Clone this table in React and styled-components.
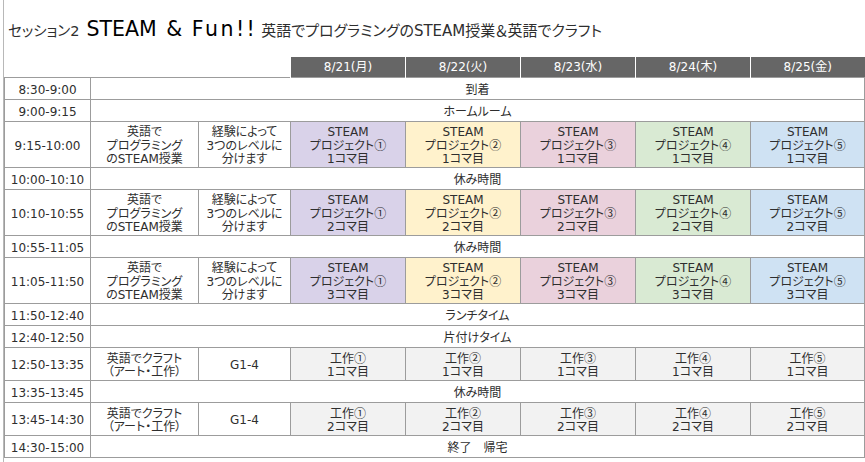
import React from 'react';
import styled, { createGlobalStyle } from 'styled-components';

const GlobalStyle = createGlobalStyle`
  html, body {
    margin: 0;
    padding: 0;
    background: #fff;
  }
  body {
    font-family: "DejaVu Sans", "Noto Sans CJK JP", sans-serif;
    color: #2e2e2e;
  }
`;

const Page = styled.div`
  margin-left: 3px;
  min-height: 462px;
  border-left: 1px solid #b8b8b8;
  font-feature-settings: "palt";
`;

const TitleBar = styled.div`
  display: flex;
  align-items: baseline;
  height: 57px;
  box-sizing: border-box;
  padding: 17px 0 0 4px;
  white-space: pre;
`;

const Session = styled.span`
  font-size: 14.5px;
`;

const BigTitle = styled.span`
  font-size: 20.5px;
  color: #000;
  margin: 0 4px 0 7px;
  word-spacing: 3px;
`;

const Fun = styled.span`
  letter-spacing: 2.5px;
`;

const Subtitle = styled.span`
  font-size: 15px;
`;

const Table = styled.table`
  border-collapse: collapse;
  table-layout: fixed;
  width: 860px;
  font-size: 12px;
  line-height: 13.5px;
  text-align: center;
`;

const HeadCell = styled.th`
  height: 18px;
  padding: 2px 0 0;
  font-weight: normal;
  font-size: 12px;
  color: #fff;
  background: ${(p) => (p.$empty ? 'transparent' : '#666')};
  border: none;
  border-left: ${(p) => (p.$empty ? 'none' : '1px solid #fff')};
`;

/* $h is the full row pitch; content height = pitch - border - top padding */
const Cell = styled.td`
  height: ${(p) => p.$h - 5}px;
  padding: 4px 0 0;
  border: 1px solid #9c9c9c;
  background: ${(p) => p.$bg || '#fff'};
  vertical-align: middle;
`;

const Circled = styled.span`
  font-family: "Noto Sans CJK JP", sans-serif;
  font-feature-settings: normal;
  line-height: 0;
`;

const days = ['8/21(月)', '8/22(火)', '8/23(水)', '8/24(木)', '8/25(金)'];
const steamColors = ['#d9d2e9', '#fff2cc', '#ead1dc', '#d9ead3', '#cfe2f3'];
const marks = ['①', '②', '③', '④', '⑤'];
const widths = [86, 108, 92, 115, 115, 115, 115, 114];

const rows = [
  { kind: 'break', time: '8:30-9:00', label: '到着' },
  { kind: 'break', time: '9:00-9:15', label: 'ホームルーム' },
  { kind: 'steam', time: '9:15-10:00', n: 1 },
  { kind: 'break', time: '10:00-10:10', label: '休み時間' },
  { kind: 'steam', time: '10:10-10:55', n: 2 },
  { kind: 'break', time: '10:55-11:05', label: '休み時間' },
  { kind: 'steam', time: '11:05-11:50', n: 3 },
  { kind: 'break', time: '11:50-12:40', label: 'ランチタイム' },
  { kind: 'break', time: '12:40-12:50', label: '片付けタイム' },
  { kind: 'craft', time: '12:50-13:35', n: 1 },
  { kind: 'break', time: '13:35-13:45', label: '休み時間' },
  { kind: 'craft', time: '13:45-14:30', n: 2 },
  { kind: 'break', time: '14:30-15:00', label: '終了　帰宅' },
];

const Row = ({ row }) => {
  if (row.kind === 'break') {
    return (
      <tr>
        <Cell $h={22}>{row.time}</Cell>
        <Cell $h={22} colSpan={7}>{row.label}</Cell>
      </tr>
    );
  }
  if (row.kind === 'steam') {
    return (
      <tr>
        <Cell $h={46}>{row.time}</Cell>
        <Cell $h={46}>英語で<br />プログラミング<br />のSTEAM授業</Cell>
        <Cell $h={46}>経験によって<br />3つのレベルに<br />分けます</Cell>
        {steamColors.map((c, i) => (
          <Cell key={i} $h={46} $bg={c}>
            STEAM<br />プロジェクト<Circled>{marks[i]}</Circled><br />{row.n}コマ目
          </Cell>
        ))}
      </tr>
    );
  }
  return (
    <tr>
      <Cell $h={33}>{row.time}</Cell>
      <Cell $h={33}>英語でクラフト<br />（アート・工作）</Cell>
      <Cell $h={33}>G1-4</Cell>
      {marks.map((m, i) => (
        <Cell key={i} $h={33} $bg="#f2f2f2">
          工作<Circled>{m}</Circled><br />{row.n}コマ目
        </Cell>
      ))}
    </tr>
  );
};

export default function App() {
  return (
    <Page>
      <GlobalStyle />
      <TitleBar>
        <Session>セッション2</Session>
        <BigTitle>STEAM & <Fun>Fun!!</Fun></BigTitle>
        <Subtitle>英語でプログラミングのSTEAM授業＆英語でクラフト</Subtitle>
      </TitleBar>
      <Table>
        <colgroup>
          {widths.map((w, i) => (
            <col key={i} style={{ width: w }} />
          ))}
        </colgroup>
        <thead>
          <tr>
            <HeadCell $empty />
            <HeadCell $empty />
            <HeadCell $empty />
            {days.map((d) => (
              <HeadCell key={d}>{d}</HeadCell>
            ))}
          </tr>
        </thead>
        <tbody>
          {rows.map((r, i) => (
            <Row key={i} row={r} />
          ))}
        </tbody>
      </Table>
    </Page>
  );
}
